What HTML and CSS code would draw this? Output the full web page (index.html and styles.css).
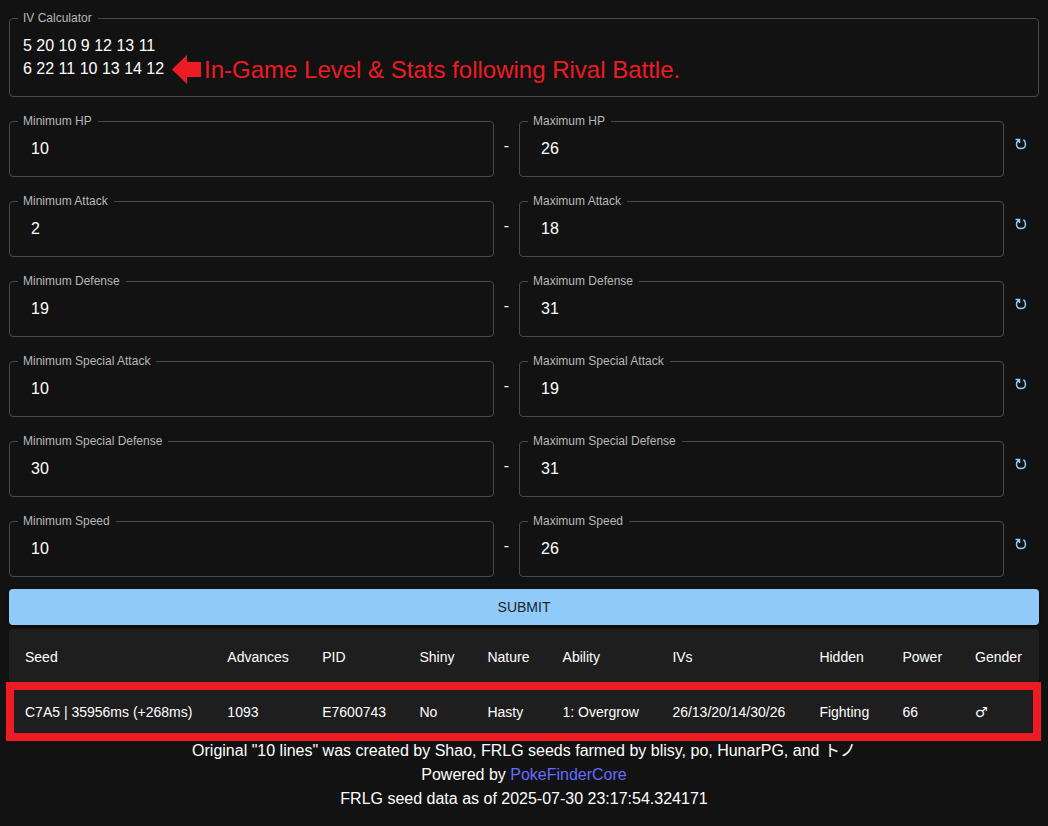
FILE: index.html
```html
<!DOCTYPE html>
<html lang="en">
<head>
<meta charset="utf-8">
<meta name="viewport" content="width=device-width, initial-scale=1">
<title>IV Calculator</title>
<link rel="stylesheet" href="styles.css">
</head>
<body>
<svg width="0" height="0" class="sprite" aria-hidden="true">
  <symbol id="reset" viewBox="0 0 12 12">
    <path d="M0.5 1.5H4.5V5M4.2 1.8C2.4 3 1.5 4.4 1.5 6.2C1.5 8.9 3.5 10.5 6 10.5S10.5 8.9 10.5 6.2C10.5 4.2 9.8 2.8 8.4 1.7" fill="none" stroke="currentColor" stroke-width="1.5"/>
  </symbol>
</svg>
<main class="page">
  <form class="form">
    <div class="field">
      <label class="label" for="iv">IV Calculator</label>
      <textarea class="control area" id="iv" rows="2" spellcheck="false">5 20 10 9 12 13 11
6 22 11 10 13 14 12</textarea>
      <div class="note">
        <svg class="arrow" viewBox="0 0 29 29" aria-hidden="true"><path d="M0 14.5L15 0V7H29V22H15V29Z" fill="currentColor"/></svg>
        <span>In-Game Level &amp; Stats following Rival Battle.</span>
      </div>
    </div>
    <div class="range">
      <div class="field"><label class="label" for="hp1">Minimum HP</label><input class="control" id="hp1" value="10"></div>
      <span class="dash">-</span>
      <div class="field"><label class="label" for="hp2">Maximum HP</label><input class="control" id="hp2" value="26"></div>
      <button class="reset" type="button" aria-label="Reset HP"><svg class="icon"><use href="#reset"/></svg></button>
    </div>
    <div class="range">
      <div class="field"><label class="label" for="at1">Minimum Attack</label><input class="control" id="at1" value="2"></div>
      <span class="dash">-</span>
      <div class="field"><label class="label" for="at2">Maximum Attack</label><input class="control" id="at2" value="18"></div>
      <button class="reset" type="button" aria-label="Reset Attack"><svg class="icon"><use href="#reset"/></svg></button>
    </div>
    <div class="range">
      <div class="field"><label class="label" for="de1">Minimum Defense</label><input class="control" id="de1" value="19"></div>
      <span class="dash">-</span>
      <div class="field"><label class="label" for="de2">Maximum Defense</label><input class="control" id="de2" value="31"></div>
      <button class="reset" type="button" aria-label="Reset Defense"><svg class="icon"><use href="#reset"/></svg></button>
    </div>
    <div class="range">
      <div class="field"><label class="label" for="sa1">Minimum Special Attack</label><input class="control" id="sa1" value="10"></div>
      <span class="dash">-</span>
      <div class="field"><label class="label" for="sa2">Maximum Special Attack</label><input class="control" id="sa2" value="19"></div>
      <button class="reset" type="button" aria-label="Reset Special Attack"><svg class="icon"><use href="#reset"/></svg></button>
    </div>
    <div class="range">
      <div class="field"><label class="label" for="sd1">Minimum Special Defense</label><input class="control" id="sd1" value="30"></div>
      <span class="dash">-</span>
      <div class="field"><label class="label" for="sd2">Maximum Special Defense</label><input class="control" id="sd2" value="31"></div>
      <button class="reset" type="button" aria-label="Reset Special Defense"><svg class="icon"><use href="#reset"/></svg></button>
    </div>
    <div class="range">
      <div class="field"><label class="label" for="sp1">Minimum Speed</label><input class="control" id="sp1" value="10"></div>
      <span class="dash">-</span>
      <div class="field"><label class="label" for="sp2">Maximum Speed</label><input class="control" id="sp2" value="26"></div>
      <button class="reset" type="button" aria-label="Reset Speed"><svg class="icon"><use href="#reset"/></svg></button>
    </div>
  </form>
  <button class="submit" type="button">SUBMIT</button>
  <table class="results">
    <thead>
      <tr><th>Seed</th><th>Advances</th><th>PID</th><th>Shiny</th><th>Nature</th><th>Ability</th><th>IVs</th><th>Hidden</th><th>Power</th><th>Gender</th></tr>
    </thead>
    <tbody>
      <tr class="marked"><td>C7A5 | 35956ms (+268ms)</td><td>1093</td><td>E7600743</td><td>No</td><td>Hasty</td><td>1: Overgrow</td><td>26/13/20/14/30/26</td><td>Fighting</td><td>66</td><td><span class="gender">♂</span></td></tr>
    </tbody>
  </table>
  <footer class="footer">
    <div>Original "10 lines" was created by Shao, FRLG seeds farmed by blisy, po, HunarPG, and トノ</div>
    <div>Powered by <a class="link" href="#">PokeFinderCore</a></div>
    <div>FRLG seed data as of 2025-07-30 23:17:54.324171</div>
  </footer>
</main>
</body>
</html>
```
FILE: styles.css
```css
* { box-sizing: border-box; }
body {
  margin: 0;
  background: #121212;
  color: #fff;
  font: 16px/24px "Liberation Sans", Arial, "Noto Sans CJK JP", sans-serif;
}
.sprite { position: absolute; }
.page { padding: 18px 9px 15px; }
.form { display: flex; flex-direction: column; gap: 24px; }
.field { position: relative; flex: 1; min-width: 0; }
.label {
  position: absolute;
  top: -8px;
  left: 9px;
  padding: 0 6px 0 5px;
  background: #121212;
  color: #b8b8b8;
  font-size: 12px;
  line-height: 16px;
}
.control {
  display: block;
  width: 100%;
  height: 56px;
  margin: 0;
  padding: 0 21px;
  border: 1px solid #494949;
  border-radius: 4px;
  background: transparent;
  color: #fff;
  font: inherit;
  outline: none;
}
.area {
  height: auto;
  padding: 15px 13px 16px;
  line-height: 23px;
  resize: none;
  overflow: hidden;
}
.note {
  position: absolute;
  top: 37px;
  left: 163px;
  display: flex;
  align-items: center;
  gap: 3px;
  color: #ed1c24;
  font-size: 24px;
  line-height: 29px;
  white-space: nowrap;
  pointer-events: none;
}
.arrow { width: 29px; height: 29px; }
.range { display: flex; }
.dash { width: 25px; padding-top: 13px; text-align: center; }
.reset {
  width: 35px;
  height: 46px;
  padding: 0 2px 0 0;
  border: 0;
  background: none;
  color: #90caf9;
  display: flex;
  align-items: center;
  justify-content: center;
}
.icon { width: 12px; height: 12px; }
.submit {
  display: block;
  width: 100%;
  height: 36px;
  margin: 12px 0 4px;
  border: 0;
  border-radius: 4px;
  background: #90caf9;
  color: #1a2530;
  font: 14px/24px "Liberation Sans", Arial, sans-serif;
  box-shadow: 0 2px 4px rgba(0, 0, 0, 0.4);
}
.results {
  width: 100%;
  border-collapse: separate;
  border-spacing: 0;
  border-radius: 4px;
  background: #1e1e1e;
  font-size: 14px;
  line-height: 20px;
}
.results th, .results td { padding: 16px; text-align: left; font-weight: 400; white-space: nowrap; }
.results th { padding: 18px 16px 19px; }
.gender { font-family: "DejaVu Sans", sans-serif; line-height: 1; }
.marked { position: relative; }
.marked::after {
  content: "";
  position: absolute;
  inset: -4px -2px -3px -3px;
  border: 8px solid #ed1c24;
  pointer-events: none;
}
.footer { padding-top: 1px; text-align: center; }
.link { color: #646cff; text-decoration: none; }
```
